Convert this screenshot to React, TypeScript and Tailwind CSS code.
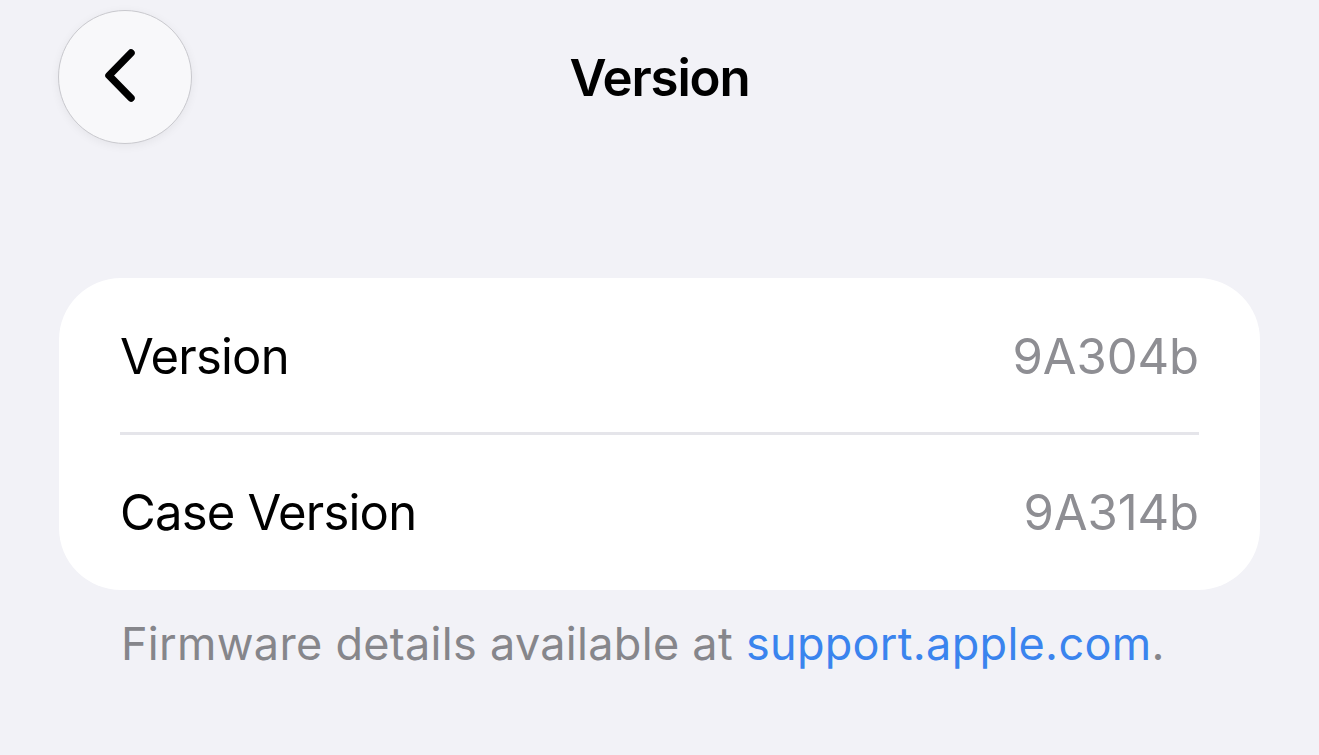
import React from "react";

export default function App() {
  return (
    <div
      className="w-[1319px] h-[755px] bg-[#f2f2f7] overflow-hidden flex flex-col"
      style={{ fontFamily: "Inter, 'Noto Sans', sans-serif" }}
    >
      <div className="relative h-[154px] flex items-center justify-center">
        <button className="absolute left-[58px] top-[10px] w-[134px] h-[134px] rounded-full bg-[#f8f8fa] border border-[#c9c9ce] shadow-[0_2px_10px_rgba(0,0,0,0.06)] flex items-center justify-center">
          <svg width="40" height="60" viewBox="0 0 40 60" className="ml-[-8px]">
            <path
              d="M30 6 L8 28.5 L30 51"
              fill="none"
              stroke="#000"
              strokeWidth="7.5"
              strokeLinecap="round"
              strokeLinejoin="round"
            />
          </svg>
        </button>
        <div className="text-[51px] font-semibold text-black tracking-[-1.2px] mt-[2px]">Version</div>
      </div>

      <div className="mt-[124px] mx-[59px] bg-white rounded-[62px] px-[61px]">
        <div className="h-[154px] pt-[3px] flex items-center justify-between text-[49px] tracking-[-0.8px]">
          <span className="text-black">Version</span>
          <span className="text-[#8e8e93] tracking-[-0.1px]">9A304b</span>
        </div>
        <div className="h-[3px] bg-[#e5e5ea]" />
        <div className="h-[155px] pt-[1px] flex items-center justify-between text-[49px] tracking-[-0.8px]">
          <span className="text-black">Case Version</span>
          <span className="text-[#8e8e93] tracking-[-0.1px]">9A314b</span>
        </div>
      </div>

      <div className="mt-[20px] ml-[121px] text-[45px] tracking-[0.3px] text-[#86868b]">
        Firmware details available at <span className="text-[#3a84ee]">support.apple.com</span>.
      </div>
    </div>
  );
}
